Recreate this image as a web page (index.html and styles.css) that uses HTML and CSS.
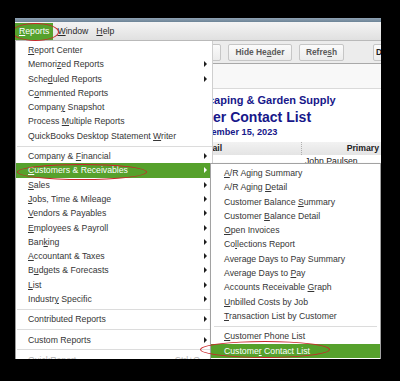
FILE: index.html
```html
<!DOCTYPE html>
<html lang="en">
<head>
  <meta charset="UTF-8">
  <meta name="viewport" content="width=device-width, initial-scale=1.0">
  <title>Reports menu - Customer Contact List</title>
  <link rel="stylesheet" href="styles.css">
</head>
<body>
  <!-- Recorte de la ventana de la aplicación -->
  <div class="shot">
    <div class="titlebar"></div>

    <!-- Barra de menú -->
    <nav class="menubar">
      <span class="mb-item active"><u>R</u>eports</span>
      <span class="mb-item"><u>W</u>indow</span>
      <span class="mb-item"><u>H</u>elp</span>
    </nav>

    <!-- Ventana del informe (queda debajo del menú) -->
    <section class="report">
      <div class="toolbar">
        <button class="tb-btn tb-print">Print &#9662;</button>
        <button class="tb-btn tb-hide">Hide He<u>a</u>der</button>
        <button class="tb-btn tb-refresh">Refre<u>s</u>h</button>
        <button class="tb-btn tb-default">D</button>
      </div>
      <div class="filterbar"></div>
      <div class="report-head">
        <div class="company">Larry's Landscaping &amp; Garden Supply</div>
        <div class="report-title">Customer Contact List</div>
        <div class="report-date">December 15, 2023</div>
      </div>
      <div class="col-head">
        <span class="c-email">Email</span>
        <span class="c-primary">Primary</span>
      </div>
      <div class="data-row">
        <span class="c-email"></span>
        <span class="c-name">John Paulsen</span>
      </div>
    </section>

    <!-- Menú Reports -->
    <ul class="menu main-menu">
      <li><u>R</u>eport Center</li>
      <li class="has-sub">Memori<u>z</u>ed Reports</li>
      <li class="has-sub">Sche<u>d</u>uled Reports</li>
      <li>C<u>o</u>mmented Reports</li>
      <li>Compan<u>y</u> Snapshot</li>
      <li>Process <u>M</u>ultiple Reports</li>
      <li>QuickBooks Desktop Statement <u>W</u>riter</li>
      <li class="sep"></li>
      <li class="has-sub">Company &amp; <u>F</u>inancial</li>
      <li class="has-sub selected"><u>C</u>ustomers &amp; Receivables</li>
      <li class="has-sub"><u>S</u>ales</li>
      <li class="has-sub"><u>J</u>obs, Time &amp; Mileage</li>
      <li class="has-sub"><u>V</u>endors &amp; Payables</li>
      <li class="has-sub"><u>E</u>mployees &amp; Payroll</li>
      <li class="has-sub">Ban<u>k</u>ing</li>
      <li class="has-sub"><u>A</u>ccountant &amp; Taxes</li>
      <li class="has-sub">B<u>u</u>dgets &amp; Forecasts</li>
      <li class="has-sub"><u>L</u>ist</li>
      <li class="has-sub">Industr<u>y</u> Specific</li>
      <li class="sep"></li>
      <li class="has-sub">Contributed Reports</li>
      <li class="sep"></li>
      <li class="has-sub">Custom Reports</li>
      <li class="sep"></li>
      <li class="disabled"><span class="shortcut">Ctrl+Q</span>QuickReport</li>
    </ul>

    <!-- Submenú Customers & Receivables -->
    <ul class="menu sub-menu">
      <li><u>A</u>/R Aging Summary</li>
      <li>A/R Aging <u>D</u>etail</li>
      <li>Customer Balance <u>S</u>ummary</li>
      <li>Customer <u>B</u>alance Detail</li>
      <li><u>O</u>pen Invoices</li>
      <li>Co<u>l</u>lections Report</li>
      <li>Average Days to Pay Summary</li>
      <li>Average Days to <u>P</u>ay</li>
      <li>Accounts Receivable <u>G</u>raph</li>
      <li><u>U</u>nbilled Costs by Job</li>
      <li><u>T</u>ransaction List by Customer</li>
      <li class="sep"></li>
      <li><u>C</u>ustomer Phone List</li>
      <li class="selected">Custome<u>r</u> Contact List</li>
    </ul>

    <!-- Marcas rojas de anotación -->
    <span class="mark mark-reports"></span>
    <span class="mark mark-customers"></span>
    <span class="mark mark-contact"></span>
  </div>
</body>
</html>
```

FILE: styles.css
```css
/* Estilos básicos */
body {
  margin: 0;
  padding: 18px 0 0 15px;
  background-color: #000;
  height: 381px;
  box-sizing: border-box;
  overflow: hidden;
  font-family: "Liberation Sans", Arial, sans-serif;
}

.shot {
  position: relative; /* Contenedor de los menús superpuestos. */
  width: 366px;
  height: 341px;
  overflow: hidden;
  background-color: #fff;
}

.titlebar {
  height: 4px;
  background: linear-gradient(#8fa2b3, #6c8396);
}

/* Barra de menú */
.menubar {
  display: flex;
  height: 18px;
  background: linear-gradient(#f4f4f4, #e0e0e0);
  border-bottom: 1px solid #b9b9b9;
}

.mb-item {
  font-size: 8.7px;
  line-height: 17px;
  margin-top: 1px;
  padding: 0 4px;
  color: #2a2a2a;
}

.mb-item.active {
  background-color: #56a12c;
  color: #fff;
}

/* Ventana del informe */
.toolbar {
  display: flex;
  align-items: center;
  gap: 7px;
  height: 22px;
  padding-left: 156px;
  overflow: hidden;
  background-color: #ececec;
  border-bottom: 1px solid #a9a9a9;
}

.tb-btn {
  flex-shrink: 0;
  height: 17px;
  padding: 0;
  font-family: inherit;
  font-size: 8.4px;
  font-weight: bold;
  color: #5a5a5a;
  background: linear-gradient(#fbfbfb, #ececec);
  border: 1px solid #c6c6c6;
  border-radius: 2px;
}

.tb-print { width: 50px; }
.tb-hide { width: 64px; }
.tb-refresh { width: 45px; }
.tb-default { width: 20px; margin-left: 22px; text-align: left; padding-left: 2px; color: #222; }

.filterbar {
  height: 24px;
  background-color: #f8f8f8;
  border-bottom: 1px solid #dadada;
}

.report-head {
  padding: 5px 0 0 76px;
  text-align: center;
  color: #17178a;
  font-weight: bold;
}

.company {
  font-size: 11px;
  line-height: 13px;
}

.report-title {
  margin-top: 1.5px;
  font-size: 14px;
  line-height: 17px;
}

.report-date {
  font-size: 9.2px;
  line-height: 13px;
}

.col-head,
.data-row {
  display: flex;
  height: 13px;
  font-size: 8.7px;
  line-height: 13px;
}

.col-head {
  margin-top: 3.5px;
  background: linear-gradient(#f2f2f2, #e4e4e4);
  font-weight: bold;
  color: #222;
}

.c-email {
  width: 287px;
  padding-left: 184px;
  box-sizing: border-box;
  border-right: 1px dotted #b0b0b0;
}

.data-row .c-email {
  border-right: none;
}

.c-primary {
  flex: 1;
  text-align: right;
  padding-right: 2px;
}

.c-name {
  padding-left: 3px;
  color: #222;
}

/* Menús desplegables */
.menu {
  position: absolute;
  list-style: none;
  margin: 0;
  padding: 2px 0;
  background-color: #fff;
  font-size: 8.7px;
  color: #363636;
  box-sizing: border-box;
}

.menu li {
  line-height: 14.3px;
  white-space: nowrap;
}

.menu li.sep {
  height: 1px;
  margin: 2.5px 0;
  background-color: #dcdcdc;
}

.menu li.selected {
  background-color: #56a12c;
  color: #fff;
}

.menu li.disabled {
  color: #b4b4b4;
}

.main-menu {
  left: 0;
  top: 23px;
  width: 198px;
  border-left: 1px solid #9c9c9c;
  border-right: 1px solid #cfcfcf;
}

.main-menu li {
  padding-left: 12px;
}

.main-menu li.sep {
  margin-left: 1px;
  padding: 0;
}

/* Flecha de submenú */
.has-sub::before {
  content: "";
  float: right;
  margin: 4px 5px 0 0;
  border-left: 3px solid #1e1e1e;
  border-top: 3px solid transparent;
  border-bottom: 3px solid transparent;
}

.selected.has-sub::before {
  border-left-color: #fff;
}

.shortcut {
  float: right;
  padding-right: 12px;
}

.sub-menu {
  left: 195px;
  top: 145px;
  width: 171px;
  border: 1px solid #a2a2a2;
  box-shadow: 1px 1px 2px rgba(0, 0, 0, 0.25);
}

.sub-menu li {
  padding-left: 13px;
}

.sub-menu li.sep {
  margin-left: 3px;
  margin-right: 3px;
  padding: 0;
}

/* Marcas rojas */
.mark {
  position: absolute;
  border: 1.5px solid #c8282b;
  border-radius: 50%;
  box-sizing: border-box;
}

.mark-reports {
  left: -3px;
  top: 5px;
  width: 47px;
  height: 18px;
}

.mark-customers {
  left: 2px;
  top: 146px;
  width: 130px;
  height: 16px;
}

.mark-contact {
  left: 185px;
  top: 323px;
  width: 130px;
  height: 17px;
}
```
